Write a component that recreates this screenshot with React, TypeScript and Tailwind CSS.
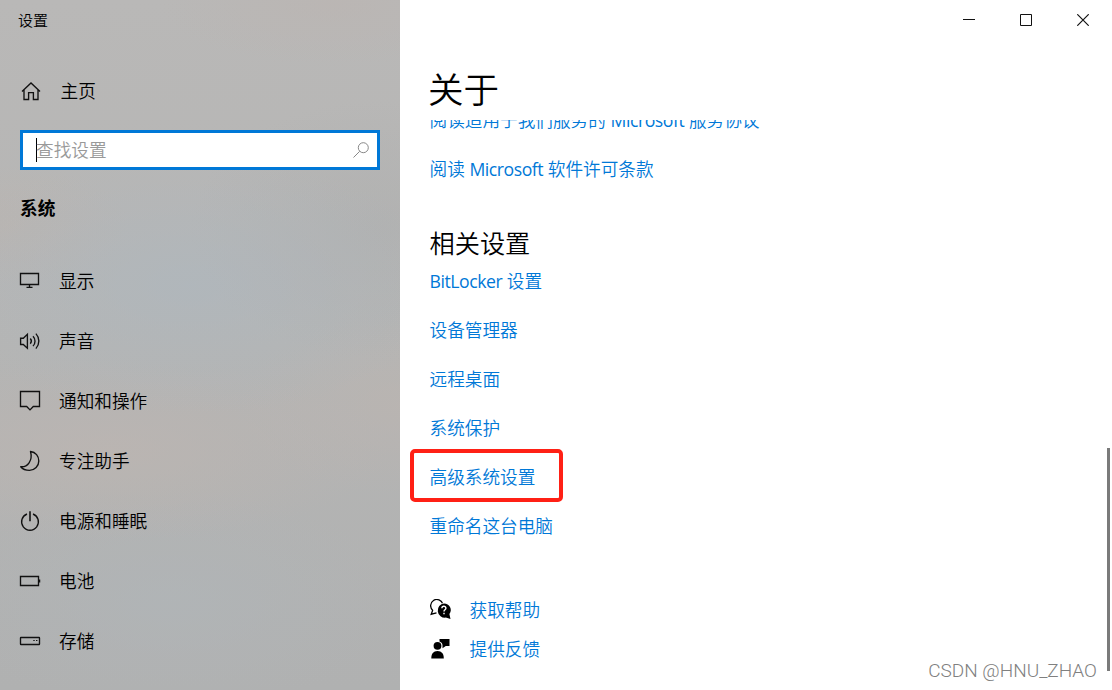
import { Fragment, type ReactNode } from 'react';

const FONT = "font-['Open_Sans','Noto_Sans_CJK_SC',sans-serif]";

function Icon({ children }: { children: ReactNode }) {
  return (
    <svg
      width="22"
      height="22"
      viewBox="0 0 22 22"
      fill="none"
      stroke="#111"
      strokeWidth="1.35"
      className="block shrink-0"
    >
      {children}
    </svg>
  );
}

// Latin runs are set a little tighter than the Chinese text around them.
function LinkText({ text }: { text: string }) {
  return (
    <>
      {text.split(/([A-Za-z]+)/).map((part, i) =>
        /[A-Za-z]/.test(part) ? (
          <span key={i} className="font-normal tracking-[-0.45px]">
            {part}
          </span>
        ) : (
          <Fragment key={i}>{part}</Fragment>
        ),
      )}
    </>
  );
}

const navItems = [
  {
    label: '显示',
    icon: (
      <>
        <path d="M1.5 3.5h18v11h-18z" />
        <path d="M10.5 14.5v3M7.5 17.3h6" />
      </>
    ),
  },
  {
    label: '声音',
    icon: (
      <>
        <path d="M1.6 8.2h2.7L8.4 4.3v14L4.3 14.5H1.6z" />
        <path d="M11.3 8.5a4 4 0 0 1 0 5.2M14 6.3a7 7 0 0 1 0 9.8M16.9 3.6a11 11 0 0 1 0 15" />
      </>
    ),
  },
  {
    label: '通知和操作',
    icon: <path d="M1.5 1.5h19v15h-6.2L11 19.9l-3.3-3.4H1.5z" />,
  },
  {
    label: '专注助手',
    icon: (
      <path
        d="M11.5 1.5C16.700 2 19.800 6.200 19.800 11c0 5-4 9.300-9.300 9.300-3.800 0-6.900-1.300-8.800-3.600C8.500 17.500 14 10.500 11.5 1.5z"
        strokeLinejoin="round"
      />
    ),
  },
  {
    label: '电源和睡眠',
    icon: (
      <>
        <path d="M8 4a8.4 8.4 0 1 0 6 0" />
        <path d="M11 1.2v10" strokeWidth="1.6" />
      </>
    ),
  },
  {
    label: '电池',
    icon: (
      <>
        <path d="M1.5 6.5h18v9h-18z" />
        <path d="M20.5 9.5v3" strokeWidth="1.5" />
      </>
    ),
  },
  {
    label: '存储',
    icon: (
      <>
        <rect x="1.5" y="7.5" width="19" height="7" rx="0.5" />
        <path d="M14.3 10.5h1.4M17 10.5h1.4" strokeWidth="1.2" />
      </>
    ),
  },
];

const relatedLinks = ['BitLocker 设置', '设备管理器', '远程桌面', '系统保护', '高级系统设置', '重命名这台电脑'];

function Sidebar() {
  return (
    <aside className="flex h-full w-[400px] shrink-0 flex-col bg-[#b5b5b4] bg-[radial-gradient(ellipse_260px_130px_at_190px_285px,rgba(174,183,190,0.7),rgba(174,183,190,0.3)_55%,rgba(174,183,190,0)),radial-gradient(ellipse_280px_90px_at_110px_450px,rgba(189,181,177,0.7),rgba(189,181,177,0)),radial-gradient(ellipse_160px_90px_at_400px_405px,rgba(188,180,176,0.6),rgba(188,180,176,0)),radial-gradient(ellipse_120px_60px_at_10px_225px,rgba(187,180,175,0.6),rgba(187,180,175,0)),radial-gradient(ellipse_170px_60px_at_330px_5px,rgba(187,181,178,0.7),rgba(187,181,178,0)),radial-gradient(ellipse_230px_110px_at_170px_600px,rgba(176,181,184,0.7),rgba(176,181,184,0)),radial-gradient(ellipse_190px_130px_at_380px_230px,rgba(172,173,173,0.5),rgba(172,173,173,0)),linear-gradient(#b9b8b7,#b5b5b4_50%,#b0b1b1)]">
      <div className="flex h-10 items-center pl-[18px] text-[15px]">设置</div>
      <div className="mt-[21px] flex h-[60px] items-center gap-[18.5px] pl-5">
        <Icon>
          <path d="M2 11.5 11 2.9l9 8.6M4 9.8v9.7h4.6v-6.9h4.8v6.9H18V9.8" />
        </Icon>
        <span>主页</span>
      </div>
      <div className="mx-5 mt-[9px] flex h-10 shrink-0 items-center border-[3px] border-[#0078d7] bg-white pl-[13px] pr-[7px]">
        <span className="h-6 w-px bg-black" />
        <span className="-ml-px flex-1 text-[#999]">查找设置</span>
        <svg width="18" height="18" viewBox="0 0 18 18" fill="none" stroke="#888" className="block">
          <circle cx="11.3" cy="6.7" r="5" />
          <path d="M7.7 10.3 1.5 16.5" />
        </svg>
      </div>
      <h2 className="mt-[23px] pl-5 font-bold leading-[30px]">系统</h2>
      <nav className="mt-7">
        {navItems.map((item) => (
          <div key={item.label} className="flex h-[60px] items-center gap-[18px] pl-[19px]">
            <Icon>{item.icon}</Icon>
            <span>{item.label}</span>
          </div>
        ))}
      </nav>
    </aside>
  );
}

function WindowButtons() {
  return (
    <div className="flex h-10 shrink-0 items-center justify-end gap-[45px] pr-[23px]">
      <svg width="12" height="12" viewBox="0 0 12 12" stroke="#111" className="block">
        <path d="M0 5.5h12" />
      </svg>
      <svg width="12" height="12" viewBox="0 0 12 12" fill="none" stroke="#111" className="block">
        <path d="M.5.5h11v11H.5z" />
      </svg>
      <svg width="12" height="12" viewBox="0 0 12 12" stroke="#111" strokeWidth="1.2" className="block">
        <path d="M.3.3l11.4 11.4M11.7.3.3 11.7" />
      </svg>
    </div>
  );
}

export default function App() {
  return (
    <div className={`flex h-[690px] w-[1112px] overflow-hidden bg-white text-[17.65px] font-[350] text-black ${FONT}`}>
      <Sidebar />
      <main className="relative flex min-w-0 flex-1 flex-col">
        <WindowButtons />
        <h1 className="mt-[19px] h-[61px] shrink-0 pl-7 text-[35.5px] leading-[60px]">关于</h1>
        <div className="flex min-h-0 flex-1 overflow-hidden">
          <div className="-mt-6 flex-1 pl-[29.5px] text-[#0078d7]">
            <div className="h-[49px] leading-[49px]">
              <LinkText text="阅读适用于我们服务的 Microsoft 服务协议" />
            </div>
            <div className="h-[49px] leading-[49px]">
              <LinkText text="阅读 Microsoft 软件许可条款" />
            </div>
            <h2 className="mt-[29px] h-[41px] text-[25.2px] leading-10 text-black">相关设置</h2>
            <ul className="-mt-[7px]">
              {relatedLinks.map((label) => (
                <li key={label} className="relative h-[49px] leading-[49px]">
                  <LinkText text={label} />
                  {label === '高级系统设置' && (
                    <span className="absolute -left-[19.5px] -top-[4px] h-[53px] w-[153px] rounded-[5px] border-4 border-[#ff2015]" />
                  )}
                </li>
              ))}
            </ul>
            <div className="mt-[39px] flex h-10 items-center gap-[18px]">
              <svg width="22" height="22" viewBox="0 0 22 22" className="block">
                <path
                  d="M2.8 11.4A6.2 6.2 0 1 1 12.8 5M2.8 10.9 1.2 15.2 6.5 13.8"
                  fill="none"
                  stroke="#000"
                  strokeWidth="1.3"
                />
                <path
                  d="M14 4.4a6.7 6.7 0 0 1 5.4 10.7l1.1 5-4.7-1.5A6.8 6.8 0 1 1 14 4.4z"
                  stroke="#fff"
                  strokeWidth="1.2"
                  paintOrder="stroke"
                />
                <path
                  d="M11.9 9.3c0-2.700 4-2.600 4-.1 0 1.500-1.900 1.600-1.900 3.200M14 13.700v1.500"
                  fill="none"
                  stroke="#fff"
                  strokeWidth="1.4"
                />
              </svg>
              <span>获取帮助</span>
            </div>
            <div className="flex h-[39px] items-center gap-[18px]">
              <svg width="22" height="22" viewBox="0 0 22 22" className="block">
                <circle cx="7.5" cy="6.800" r="3.9" />
                <path d="M1.3 19.500c0-4.500 2-7.400 6.200-7.400s6.300 2.900 6.300 7.400z" />
                <path d="M9.500 0h10v7h-3.700l-3.300 2.300V6.500c0-2-1-3.300-3-4z" />
              </svg>
              <span>提供反馈</span>
            </div>
          </div>
          <div className="mr-0.5 mt-[328px] h-[223px] w-[3px] bg-[#7a7a7a]" />
        </div>
        <div className="absolute bottom-[5px] right-[15px] font-['Roboto',sans-serif] text-[19px] font-light leading-7 text-[#808080]">
          CSDN @HNU_ZHAO
        </div>
      </main>
    </div>
  );
}
